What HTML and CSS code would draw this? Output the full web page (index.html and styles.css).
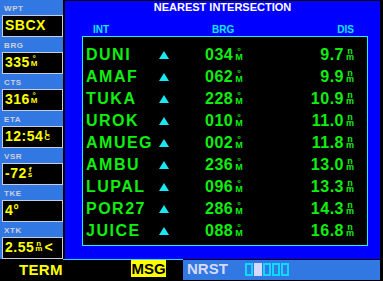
FILE: index.html
```html
<!DOCTYPE html>
<html lang="en">
<head>
    <meta charset="UTF-8">
    <meta name="viewport" content="width=device-width, initial-scale=1.0">
    <title>Nearest Intersection</title>
    <link rel="stylesheet" href="styles.css">
</head>
<body>

    <div class="screen">
        <div class="top">

            <!-- Data fields on the left -->
            <div class="sidebar">
                <div class="field">
                    <div class="field-label">WPT</div>
                    <div class="field-box"><span class="field-val">SBCX</span></div>
                </div>
                <div class="field">
                    <div class="field-label">BRG</div>
                    <div class="field-box"><span class="field-val">335</span><span class="field-unit"><i>°</i><i>M</i></span></div>
                </div>
                <div class="field">
                    <div class="field-label">CTS</div>
                    <div class="field-box"><span class="field-val">316</span><span class="field-unit"><i>°</i><i>M</i></span></div>
                </div>
                <div class="field">
                    <div class="field-label">ETA</div>
                    <div class="field-box"><span class="field-val">12:54</span><span class="field-unit"><i>L</i><i>C</i></span></div>
                </div>
                <div class="field">
                    <div class="field-label">VSR</div>
                    <div class="field-box"><span class="field-val">-72</span><span class="field-unit"><i>f</i><i>s</i></span></div>
                </div>
                <div class="field">
                    <div class="field-label">TKE</div>
                    <div class="field-box"><span class="field-val">4°</span></div>
                </div>
                <div class="field">
                    <div class="field-label">XTK</div>
                    <div class="field-box"><span class="field-val">2.55</span><span class="field-unit"><i>n</i><i>m</i></span><span class="field-val arrow-left">&lt;</span></div>
                </div>
            </div>

            <!-- Nearest intersection page -->
            <div class="page">
                <h1>NEAREST INTERSECTION</h1>
                <div class="col-heads">
                    <span class="h-int">INT</span>
                    <span class="h-brg">BRG</span>
                    <span class="h-dis">DIS</span>
                </div>

                <div class="list">
                    <div class="row">
                        <span class="name">DUNI</span><span class="arrow"></span>
                        <span class="brg"><span class="num">034</span><span class="unit"><i>°</i><i>M</i></span></span>
                        <span class="dis"><span class="num">9.7</span><span class="unit"><i>n</i><i>m</i></span></span>
                    </div>
                    <div class="row">
                        <span class="name">AMAF</span><span class="arrow"></span>
                        <span class="brg"><span class="num">062</span><span class="unit"><i>°</i><i>M</i></span></span>
                        <span class="dis"><span class="num">9.9</span><span class="unit"><i>n</i><i>m</i></span></span>
                    </div>
                    <div class="row">
                        <span class="name">TUKA</span><span class="arrow"></span>
                        <span class="brg"><span class="num">228</span><span class="unit"><i>°</i><i>M</i></span></span>
                        <span class="dis"><span class="num">10.9</span><span class="unit"><i>n</i><i>m</i></span></span>
                    </div>
                    <div class="row">
                        <span class="name">UROK</span><span class="arrow"></span>
                        <span class="brg"><span class="num">010</span><span class="unit"><i>°</i><i>M</i></span></span>
                        <span class="dis"><span class="num">11.0</span><span class="unit"><i>n</i><i>m</i></span></span>
                    </div>
                    <div class="row">
                        <span class="name">AMUEG</span><span class="arrow"></span>
                        <span class="brg"><span class="num">002</span><span class="unit"><i>°</i><i>M</i></span></span>
                        <span class="dis"><span class="num">11.8</span><span class="unit"><i>n</i><i>m</i></span></span>
                    </div>
                    <div class="row">
                        <span class="name">AMBU</span><span class="arrow"></span>
                        <span class="brg"><span class="num">236</span><span class="unit"><i>°</i><i>M</i></span></span>
                        <span class="dis"><span class="num">13.0</span><span class="unit"><i>n</i><i>m</i></span></span>
                    </div>
                    <div class="row">
                        <span class="name">LUPAL</span><span class="arrow"></span>
                        <span class="brg"><span class="num">096</span><span class="unit"><i>°</i><i>M</i></span></span>
                        <span class="dis"><span class="num">13.3</span><span class="unit"><i>n</i><i>m</i></span></span>
                    </div>
                    <div class="row">
                        <span class="name">POR27</span><span class="arrow"></span>
                        <span class="brg"><span class="num">286</span><span class="unit"><i>°</i><i>M</i></span></span>
                        <span class="dis"><span class="num">14.3</span><span class="unit"><i>n</i><i>m</i></span></span>
                    </div>
                    <div class="row">
                        <span class="name">JUICE</span><span class="arrow"></span>
                        <span class="brg"><span class="num">088</span><span class="unit"><i>°</i><i>M</i></span></span>
                        <span class="dis"><span class="num">16.8</span><span class="unit"><i>n</i><i>m</i></span></span>
                    </div>
                </div>
            </div>

        </div>

        <div class="rule"></div>

        <!-- Status bar -->
        <div class="status">
            <span class="term">TERM</span>
            <span class="msg">MSG</span>
            <div class="nrst">
                <span class="nrst-label">NRST</span>
                <div class="segs">
                    <span class="seg"></span>
                    <span class="seg on"></span>
                    <span class="seg"></span>
                    <span class="seg"></span>
                    <span class="seg"></span>
                </div>
            </div>
        </div>
    </div>

</body>
</html>
```

FILE: styles.css
```css
body {
    margin: 0;
    background-color: #000;
}

.screen {
    width: 383px;
    height: 281px;
    overflow: hidden;
    display: flex;
    flex-direction: column;
    font-family: 'Liberation Sans', Arial, sans-serif;
    font-weight: bold;
}

i {
    font-style: normal;
    display: block;
}

.top {
    display: flex;
    height: 259px;
}

/* Left data fields */
.sidebar {
    width: 63px;
    background-color: #3278e2;
}

.field-label {
    height: 15px;
    box-sizing: border-box;
    padding: 5px 0 0 4px;
    font-size: 8px;
    line-height: 8px;
    letter-spacing: 0.6px;
    color: #cfd0dc;
}

.field-box {
    height: 22px;
    box-sizing: border-box;
    margin-left: 2px;
    padding: 4px 0 0 2px;
    border: 1px solid #c8ccdf;
    background-color: #000;
    color: #ffff00;
    display: flex;
    align-items: flex-start;
}

.field-val {
    font-size: 14px;
    line-height: 10px;
    letter-spacing: 0.5px;
}

.field-unit {
    display: flex;
    flex-direction: column;
    align-items: center;
    margin-left: 1px;
    font-size: 8px;
    line-height: 4px;
}

.field-unit i:last-child {
    line-height: 6px;
}

.arrow-left {
    margin-left: 2px;
}

/* Nearest page */
.page {
    width: 315px;
    height: 258px;
    margin: 1px 3px 0 2px;
    background-color: #0000ff;
    display: flex;
    flex-direction: column;
}

h1 {
    margin: 1px 0 0;
    font-size: 11px;
    line-height: 11px;
    text-align: center;
    color: #fff;
}

.col-heads {
    display: flex;
    margin-top: 12px;
    padding: 0 26px 0 28px;
    font-size: 10px;
    line-height: 10px;
    color: #10e8ff;
}

.h-int {
    width: 119px;
}

.h-brg {
    flex: 1;
}

.list {
    height: 210px;
    box-sizing: border-box;
    margin: 1px 12px 0 17px;
    padding: 7px 13px 3px 3px;
    border: 1px solid #18f0ff;
    background-color: #000;
}

.row {
    display: grid;
    grid-template-columns: 73px 46px 55px 1fr;
    height: 22px;
    align-items: center;
    color: #10ee10;
}

.name {
    font-size: 16px;
    line-height: 12px;
    letter-spacing: 1.5px;
}

.arrow {
    width: 0;
    height: 0;
    border-left: 5px solid transparent;
    border-right: 5px solid transparent;
    border-bottom: 8px solid #18e8f4;
}

.brg,
.dis {
    display: flex;
    align-items: flex-start;
}

.dis {
    justify-content: flex-end;
}

.num {
    font-size: 16px;
    line-height: 12px;
    letter-spacing: 0.5px;
}

.unit {
    display: flex;
    flex-direction: column;
    align-items: center;
    margin-left: 2px;
    font-size: 9px;
    line-height: 5px;
}

.unit i:last-child {
    line-height: 7px;
}

/* Status bar */
.rule {
    height: 1px;
    width: 120px;
    margin-left: 63px;
    background-color: #18e0ff;
}

.status {
    height: 21px;
    display: flex;
    align-items: flex-start;
}

.term {
    width: 131px;
    box-sizing: border-box;
    padding: 2px 0 0 19px;
    font-size: 15px;
    line-height: 15px;
    letter-spacing: 0.3px;
    color: #ffff00;
}

.msg {
    width: 35px;
    height: 17px;
    background-color: #ffff00;
    color: #000;
    text-align: center;
    font-size: 15px;
    line-height: 17px;
}

.nrst {
    width: 197px;
    height: 20px;
    margin-left: 17px;
    background-color: #3278e2;
    display: flex;
    align-items: flex-start;
}

.nrst-label {
    padding: 1px 0 0 4px;
    font-size: 15px;
    line-height: 15px;
    color: #d8d8ff;
}

.segs {
    display: flex;
    gap: 1px;
    margin: 3px 0 0 17px;
}

.seg {
    width: 8px;
    height: 13px;
    box-sizing: border-box;
    border: 2px solid #10d8ff;
}

.seg.on {
    background-color: #d8d8ff;
    border-color: #d8d8ff;
}
```
